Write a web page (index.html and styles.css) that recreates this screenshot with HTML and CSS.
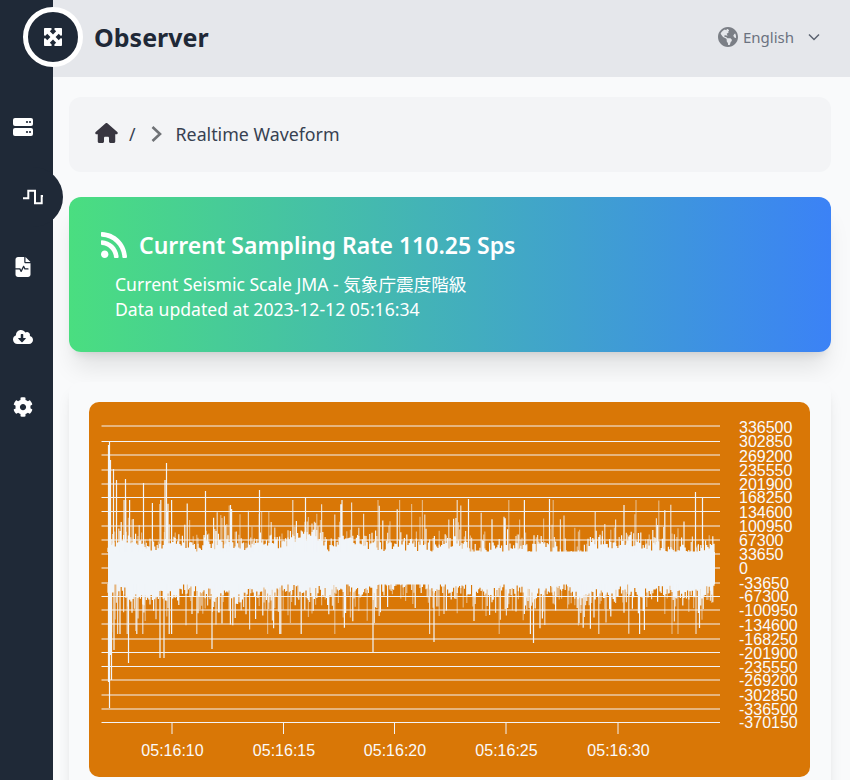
FILE: index.html
```html
<!DOCTYPE html>
<html lang="en">
<head>
<meta charset="utf-8">
<title>Observer</title>
<link rel="stylesheet" href="styles.css">
</head>
<body>
<div class="app">
  <aside class="sidebar">
    <nav class="nav">
      <a class="nav-item">
        <svg class="nav-icon server" viewBox="0 0 20 18"><rect width="20" height="8" rx="2" fill="#fff"/><rect y="10" width="20" height="8" rx="2" fill="#fff"/><circle cx="17" cy="4" r="1.1" fill="#1f2937"/><circle cx="14" cy="4" r="1.1" fill="#1f2937"/><circle cx="17" cy="14" r="1.1" fill="#1f2937"/><circle cx="14" cy="14" r="1.1" fill="#1f2937"/></svg>
      </a>
      <a class="nav-item active">
        <svg class="nav-icon" viewBox="0 0 20 20"><path d="M0 11.3H5.3V3.7H12V16.3H18.7V9H20" fill="none" stroke="#fff" stroke-width="2"/></svg>
      </a>
      <a class="nav-item">
        <svg class="nav-icon" viewBox="0 0 448 512"><path fill="#fff" d="M96 0C60.7 0 32 28.7 32 64V288H144c6.1 0 11.6 3.4 14.3 8.8L176 332.2l49.7-99.4c2.7-5.4 8.2-8.8 14.3-8.8s11.6 3.4 14.3 8.8L281.9 288H352c8.8 0 16 7.2 16 16s-7.2 16-16 16H272c-6.1 0-11.6-3.4-14.3-8.8L240 275.8l-49.7 99.4c-2.7 5.4-8.2 8.8-14.3 8.8s-11.6-3.4-14.3-8.8L134.1 320H32V448c0 35.3 28.7 64 64 64H352c35.3 0 64-28.7 64-64V160H288c-17.7 0-32-14.3-32-32V0H96zM288 0V128H416L288 0z"/></svg>
      </a>
      <a class="nav-item">
        <svg class="nav-icon" viewBox="0 0 640 512"><path fill="#fff" d="M537.6 226.6c4.1-10.7 6.4-22.4 6.4-34.6 0-53-43-96-96-96-19.7 0-38.1 6-53.3 16.2C367 64.2 315.3 32 256 32c-88.4 0-160 71.6-160 160 0 2.7.1 5.4.2 8.1C40.2 219.8 0 273.2 0 336c0 79.5 64.5 144 144 144h368c70.7 0 128-57.3 128-128 0-61.9-44-113.6-102.4-125.4zm-132.9 88.7L299.3 420.7c-6.2 6.2-16.4 6.2-22.6 0L171.3 315.3c-10.1-10.1-2.9-27.3 11.3-27.3H248V176c0-8.8 7.2-16 16-16h48c8.8 0 16 7.2 16 16v112h65.4c14.2 0 21.4 17.2 11.3 27.3z"/></svg>
      </a>
      <a class="nav-item">
        <svg class="nav-icon" viewBox="0 0 512 512"><path fill="#fff" d="M487.4 315.7l-42.6-24.6c4.3-23.2 4.3-47 0-70.2l42.6-24.6c4.9-2.8 7.1-8.6 5.5-14-11.1-35.6-30-67.8-54.7-94.6-3.8-4.1-10-5.1-14.8-2.3L380.8 110c-17.9-15.4-38.5-27.3-60.8-35.1V25.8c0-5.6-3.9-10.5-9.4-11.7-36.7-8.2-74.3-7.8-109.2 0-5.5 1.2-9.4 6.1-9.4 11.7V75c-22.2 7.9-42.8 19.8-60.8 35.1L88.7 85.5c-4.9-2.8-11-1.9-14.8 2.3-24.7 26.7-43.6 58.9-54.7 94.6-1.7 5.4.6 11.2 5.5 14L67.3 221c-4.3 23.2-4.3 47 0 70.2l-42.6 24.6c-4.9 2.8-7.1 8.6-5.5 14 11.1 35.6 30 67.8 54.7 94.6 3.8 4.1 10 5.1 14.8 2.3l42.6-24.6c17.9 15.4 38.5 27.3 60.8 35.1v49.2c0 5.6 3.9 10.5 9.4 11.7 36.7 8.2 74.3 7.8 109.2 0 5.5-1.2 9.4-6.1 9.4-11.7v-49.2c22.2-7.9 42.8-19.8 60.8-35.1l42.6 24.6c4.9 2.8 11 1.9 14.8-2.3 24.7-26.7 43.6-58.9 54.7-94.6 1.5-5.5-.7-11.3-5.6-14.1zM256 336c-44.1 0-80-35.9-80-80s35.9-80 80-80 80 35.9 80 80-35.9 80-80 80z"/></svg>
      </a>
    </nav>
  </aside>
  <div class="column">
    <header class="topbar">
      <div class="logo">
        <svg class="logo-icon" viewBox="32 32 448 448"><path fill="#fff" d="M200 32H56C42.7 32 32 42.7 32 56V200c0 9.7 5.8 18.5 14.8 22.2s19.3 1.7 26.2-5.2l40-40 79 79-79 79L73 295c-6.9-6.9-17.2-8.9-26.2-5.2S32 302.3 32 312V456c0 13.3 10.7 24 24 24H200c9.7 0 18.5-5.8 22.2-14.8s1.7-19.3-5.2-26.2l-40-40 79-79 79 79-40 40c-6.9 6.9-8.9 17.2-5.2 26.2s12.5 14.8 22.2 14.8H456c13.3 0 24-10.7 24-24V312c0-9.7-5.8-18.5-14.8-22.2s-19.3-1.7-26.2 5.2l-40 40-79-79 79-79 40 40c6.9 6.9 17.2 8.9 26.2 5.2s14.8-12.5 14.8-22.2V56c0-13.3-10.7-24-24-24H312c-9.7 0-18.5 5.8-22.2 14.8s-1.7 19.3 5.2 26.2l40 40-79 79-79-79 40-40c6.9-6.9 8.9-17.2 5.2-26.2S209.7 32 200 32z"/></svg>
      </div>
      <h1 class="brand">Observer</h1>
      <div class="lang">
        <svg class="globe" viewBox="0 8 496 496"><path fill="#7b7f86" d="M248 8C111.03 8 0 119.03 0 256s111.03 248 248 248 248-111.03 248-248S384.97 8 248 8zm82.29 357.6c-3.9 3.88-7.99 7.95-11.31 11.28-2.99 3-5.1 6.7-6.17 10.71-1.51 5.66-2.73 11.38-4.77 16.87l-17.39 46.85c-13.76 3-28 4.69-42.65 4.69v-27.38c1.69-12.62-7.64-36.26-22.63-51.25-6-6-9.37-14.14-9.37-22.63v-32.01c0-11.64-6.27-22.34-16.46-27.97-14.37-7.95-34.81-19.06-48.81-26.11-11.48-5.78-22.1-13.14-31.65-21.75l-.8-.72a114.792 114.792 0 0 1-18.06-20.74c-9.38-13.77-24.66-36.42-34.59-51.14 20.47-45.5 57.36-82.04 103.2-101.89l24.01 12.01C203.48 89.74 216 82.01 216 70.11v-11.3c7.99-1.29 16.12-2.11 24.39-2.42l28.3 28.3c6.25 6.25 6.25 16.38 0 22.63L264 112l-10.34 10.34c-3.12 3.12-3.12 8.19 0 11.31l4.69 4.69c3.12 3.12 3.12 8.19 0 11.31l-8 8a8.008 8.008 0 0 1-5.66 2.34h-8.99c-2.08 0-4.08.81-5.58 2.27l-9.92 9.65a8.008 8.008 0 0 0-1.58 9.31l15.59 31.19c2.66 5.32-1.21 11.58-7.15 11.58h-5.64c-1.93 0-3.79-.7-5.24-1.96l-9.28-8.06a16.017 16.017 0 0 0-15.55-3.1l-31.17 10.39a11.95 11.95 0 0 0-8.17 11.34c0 4.53 2.56 8.66 6.61 10.69l11.08 5.54c9.41 4.71 19.79 7.16 30.31 7.16s22.59 27.29 32 32h66.75c8.49 0 16.62 3.37 22.63 9.37l13.69 13.69a30.503 30.503 0 0 1 8.93 21.57 46.536 46.536 0 0 1-13.72 32.98zM417 274.25c-5.79-1.45-10.84-5-14.15-9.97l-17.98-26.97a23.97 23.97 0 0 1 0-26.62l19.59-29.38c2.32-3.47 5.5-6.29 9.24-8.15l12.98-6.49C440.2 193.59 448 223.87 448 256c0 8.67-.74 17.16-1.82 25.54L417 274.25z"/></svg>
        <span class="lang-label">English</span>
        <svg class="lang-caret" viewBox="0 0 12 8"><path d="M1 1.5L6 6.5L11 1.5" fill="none" stroke="#5b6270" stroke-width="1.5"/></svg>
      </div>
    </header>
    <main class="content">
      <div class="crumbs">
        <svg class="crumb-home" viewBox="0 0 576 512"><path fill="#383640" d="M575.8 255.5c0 18-15 32.1-32 32.1h-32l.7 160.2c0 2.7-.2 5.4-.5 8.1V472c0 22.1-17.9 40-40 40H456c-1.1 0-2.2 0-3.3-.1c-1.4 .1-2.8 .1-4.2 .1H416 392c-22.1 0-40-17.9-40-40V448 384c0-17.7-14.3-32-32-32H256c-17.7 0-32 14.3-32 32v64 24c0 22.1-17.9 40-40 40H160 128.1c-1.5 0-3-.1-4.5-.2c-1.2 .1-2.4 .2-3.6 .2H104c-22.1 0-40-17.9-40-40V360c0-.9 0-1.9 .1-2.8V287.6H32c-18 0-32-14-32-32.1c0-9 3-17 10-24L266.4 8c7-7 15-8 22-8s15 2 21 7L564.8 231.5c8 7 12 15 11 24z"/></svg>
        <span class="crumb-sep">/</span>
        <svg class="crumb-arrow" viewBox="0 0 11 16"><path d="M1.5 1L9 8L1.5 15" fill="none" stroke="#6f7276" stroke-width="2.6"/></svg>
        <span class="crumb-text">Realtime Waveform</span>
      </div>
      <section class="banner">
        <div class="banner-title">
          <svg class="rss" viewBox="0 32 448 448"><path fill="#fff" d="M128.081 415.959c0 35.369-28.672 64.041-64.041 64.041S0 451.328 0 415.959s28.672-64.041 64.041-64.041 64.04 28.673 64.04 64.041zm175.66 47.25c-8.354-154.6-132.185-278.587-286.95-286.95C7.656 175.765 0 183.105 0 192.253v48.069c0 8.415 6.49 15.472 14.887 16.018 111.832 7.284 201.473 96.702 208.772 208.772.547 8.397 7.604 14.887 16.018 14.887h48.069c9.149.001 16.489-7.655 15.995-16.79zm144.249.288C439.596 229.677 251.465 40.445 16.503 32.01 7.473 31.686 0 38.981 0 48.016v48.068c0 8.625 6.835 15.645 15.453 15.999 191.179 7.839 344.627 161.316 352.465 352.465.353 8.618 7.373 15.453 15.999 15.453h48.068c9.034-.001 16.329-7.474 16.005-16.504z"/></svg>
          <h2 class="banner-heading">Current Sampling Rate 110.25 Sps</h2>
        </div>
        <p class="banner-line">Current Seismic Scale JMA - 気象庁震度階級</p>
        <p class="banner-line">Data updated at 2023-12-12 05:16:34</p>
      </section>
      <section class="chart-card">
        <div class="chart">
          <svg class="chart-svg" viewBox="89 402 721 375" xmlns="http://www.w3.org/2000/svg">
            <g class="grid">
              <path d="M101.5 426H720M101.5 441.5H720M101.5 455H720M101.5 470H720M101.5 484H720M101.5 497.5H720M101.5 511.5H720M101.5 526H720M101.5 540H720M101.5 554H720M101.5 568H720M101.5 583H720M101.5 596.5H720M101.5 610H720M101.5 624H720M101.5 639H720M101.5 652.5H720M101.5 666.5H720M101.5 680H720M101.5 695H720M101.5 709H720M101.5 722.5H720"/>
              <path d="M172 722V734M283.5 722V734M394.5 722V734M506 722V734M618 722V734"/>
            </g>
            <g id="wave" class="wave"></g>
            <g class="axis-y">
              <text x="739" y="432.5">336500</text><text x="739" y="446.5">302850</text><text x="739" y="461.5">269200</text><text x="739" y="475.5">235550</text><text x="739" y="490">201900</text><text x="739" y="503">168250</text><text x="739" y="518">134600</text><text x="739" y="532">100950</text><text x="739" y="546">67300</text><text x="739" y="560">33650</text><text x="739" y="574">0</text><text x="739" y="588.5">-33650</text><text x="739" y="602">-67300</text><text x="739" y="616">-100950</text><text x="739" y="630.5">-134600</text><text x="739" y="645">-168250</text><text x="739" y="658.5">-201900</text><text x="739" y="672.5">-235550</text><text x="739" y="686">-269200</text><text x="739" y="701">-302850</text><text x="739" y="714.5">-336500</text><text x="739" y="728">-370150</text>
            </g>
            <g class="axis-x">
              <text x="172.5" y="756">05:16:10</text><text x="284" y="756">05:16:15</text><text x="395" y="756">05:16:20</text><text x="506.5" y="756">05:16:25</text><text x="618.5" y="756">05:16:30</text>
            </g>
          </svg>
        </div>
      </section>
    </main>
  </div>
</div>
<script src="wave.js"></script>
</body>
</html>
```
FILE: styles.css
```css
* { box-sizing: border-box; }
html, body { margin: 0; padding: 0; }
body {
  font-family: "Noto Sans", "Noto Sans CJK JP", sans-serif;
  background: #f9fafb;
  color: #374151;
}
.app { display: flex; height: 100vh; overflow: hidden; }

.sidebar { flex: 0 0 53px; min-width: 0; width: 53px; background: #1f2937; position: relative; z-index: 2; }
.nav { display: flex; flex-direction: column; align-items: flex-start; gap: 10px; width: 53px; padding-top: 97px; }
.nav-item { display: flex; flex: none; align-items: center; width: 53px; height: 60px; padding-left: 13px; }
.nav-item.active { width: 63px; padding-left: 23px; background: #1f2937; border-radius: 0 30px 30px 0; }
.nav-icon { width: 20px; height: 20px; display: block; }
.nav-icon.server { height: 18px; }

.column { flex: 1; min-width: 0; display: flex; flex-direction: column; }
.topbar { flex: 0 0 77px; display: flex; align-items: center; background: #e5e7eb; padding: 0 30px 3px 0; }
.logo {
  width: 60px; height: 60px; margin-left: -30px; margin-right: 11px;
  border: 5px solid #fff; border-radius: 50%; background: #1f2937;
  display: flex; align-items: center; justify-content: center;
  position: relative; z-index: 3;
}
.logo-icon { width: 18px; height: 18px; display: block; }
.brand { margin: 0; font-size: 25px; font-weight: 700; line-height: 32px; color: #1f2937; }
.lang { margin-left: auto; display: flex; align-items: center; }
.globe { width: 20px; height: 20px; display: block; margin-right: 5px; }
.lang-label { font-size: 15px; line-height: 20px; color: #6b7280; }
.lang-caret { width: 12px; height: 8px; display: block; margin-left: 14px; }

.content { flex: 1; min-height: 0; padding: 20px 19px 0 16px; display: flex; flex-direction: column; }
.crumbs {
  flex: 0 0 75px; display: flex; align-items: center;
  padding: 0 0 2px 26px; background: #f3f4f6; border-radius: 12px;
}
.crumb-home { width: 23px; height: 20px; display: block; margin: 0 11px 2px 0; }
.crumb-sep { font-size: 17.6px; line-height: 24px; margin-right: 15px; color: #374151; }
.crumb-arrow { width: 11px; height: 16px; display: block; margin-right: 14px; }
.crumb-text { font-size: 17.8px; line-height: 24px; font-weight: 400; color: #374151; }

.banner {
  flex: 0 0 155px; margin-top: 25px; padding: 31px 0 0 32px;
  color: #fff; border-radius: 12px;
  background: linear-gradient(to right, #4ade80, #3b82f6);
  box-shadow: 0 20px 25px -5px rgba(0,0,0,.1), 0 8px 10px -6px rgba(0,0,0,.1);
}
.banner-title { display: flex; align-items: center; gap: 12px; margin-bottom: 10px; }
.rss { width: 26px; height: 26px; display: block; }
.banner-heading { margin: 0; font-size: 23px; line-height: 34px; font-weight: 600; }
.banner-line { margin: 0 0 0 14px; font-size: 17.6px; line-height: 25px; }

.chart-card {
  flex: 0 0 auto; margin-top: 30px; padding: 20px 21px 20px 20px;
  background: #f9fafb; border-radius: 12px;
  box-shadow: 0 10px 15px -3px rgba(0,0,0,.1), 0 4px 6px -4px rgba(0,0,0,.1);
}
.chart { background: #d97706; border-radius: 10px; height: 375px; overflow: hidden; }
.chart-svg { display: block; width: 721px; height: 375px; }
.grid path { fill: none; stroke: #f3f4f6; stroke-width: 1; }
.axis-y text, .axis-x text { font-family: "Liberation Sans", Arial, sans-serif; font-size: 16px; fill: #f9fafb; }
.axis-x text { text-anchor: middle; }
```
FILE: wave.js
```js
// Seeded pseudo-random seismic trace, drawn as vertical strokes around a solid core.
(function () {
  var seed = 20231212;
  function rnd() {
    seed = (seed * 1664525 + 1013904223) >>> 0;
    return seed / 4294967296;
  }
  function spike(mean) { return -Math.log(1 - rnd()) * mean; }

  var SVG = "http://www.w3.org/2000/svg";
  var COLOR = "#f1f5f9";
  var group = document.getElementById("wave");
  var LEFT = 108, RIGHT = 715, TOP = 552, BOTTOM = 584;
  var buckets = { "1": "", "0.8": "", "0.5": "" };
  var keys = Object.keys(buckets);

  var band = document.createElementNS(SVG, "rect");
  band.setAttribute("x", LEFT);
  band.setAttribute("y", TOP);
  band.setAttribute("width", RIGHT - LEFT);
  band.setAttribute("height", BOTTOM - TOP);
  band.setAttribute("fill", COLOR);
  group.appendChild(band);

  // Slowly wandering envelope so that the core's edge forms humps.
  var humpA = 0, humpB = 0;
  for (var x = LEFT; x <= RIGHT; x += 1.2) {
    humpA += (rnd() - 0.5) * 5; humpA *= 0.92;
    humpB += (rnd() - 0.5) * 5; humpB *= 0.92;
    var xx = x.toFixed(1);
    var core1 = 2 + humpA + rnd() * 12;
    var core2 = 2 + humpB + rnd() * 12;
    buckets["1"] += "M" + xx + " " + TOP + "V" + (TOP - Math.max(core1, 0.5)).toFixed(1);
    buckets["1"] += "M" + xx + " " + BOTTOM + "V" + (BOTTOM + Math.max(core2, 0.5)).toFixed(1);
    if (rnd() < 0.45) {
      var loud = x < 170 ? 1.5 : 1;
      var up = Math.min(core1 + 5 + spike(13) * loud, 52);
      buckets[keys[Math.floor(rnd() * 3)]] += "M" + xx + " " + TOP + "V" + (TOP - up).toFixed(1);
    }
    if (rnd() < 0.45) {
      var loud2 = x < 170 ? 1.5 : 1;
      var down = Math.min(core2 + 5 + spike(13) * loud2, 50);
      buckets[keys[Math.floor(rnd() * 3)]] += "M" + xx + " " + BOTTOM + "V" + (BOTTOM + down).toFixed(1);
    }
  }

  var peaks = [[109.5, 441], [113.5, 469], [116.5, 480], [125.5, 479], [143.5, 483], [166.5, 463], [165, 480], [205.5, 491], [259.5, 490], [305.5, 497], [549.5, 499], [695.5, 492], [702.5, 498], [468.5, 499], [230.5, 505], [624, 505], [108.5, 445], [110.5, 460]];
  var dips = [[109.5, 708], [108.5, 682], [111.5, 680], [128.5, 663], [114, 650], [160, 658], [164, 658], [212, 649], [373, 652], [434, 642], [699.5, 628], [533.5, 643], [579, 623], [110.5, 655]];
  peaks.forEach(function (p) { buckets["1"] += "M" + p[0] + " " + TOP + "V" + p[1]; });
  dips.forEach(function (p) { buckets["1"] += "M" + p[0] + " " + BOTTOM + "V" + p[1]; });

  keys.forEach(function (k) {
    var path = document.createElementNS(SVG, "path");
    path.setAttribute("d", buckets[k]);
    path.setAttribute("fill", "none");
    path.setAttribute("stroke", COLOR);
    path.setAttribute("stroke-width", "1.2");
    path.setAttribute("stroke-opacity", k);
    group.appendChild(path);
  });
})();
```
